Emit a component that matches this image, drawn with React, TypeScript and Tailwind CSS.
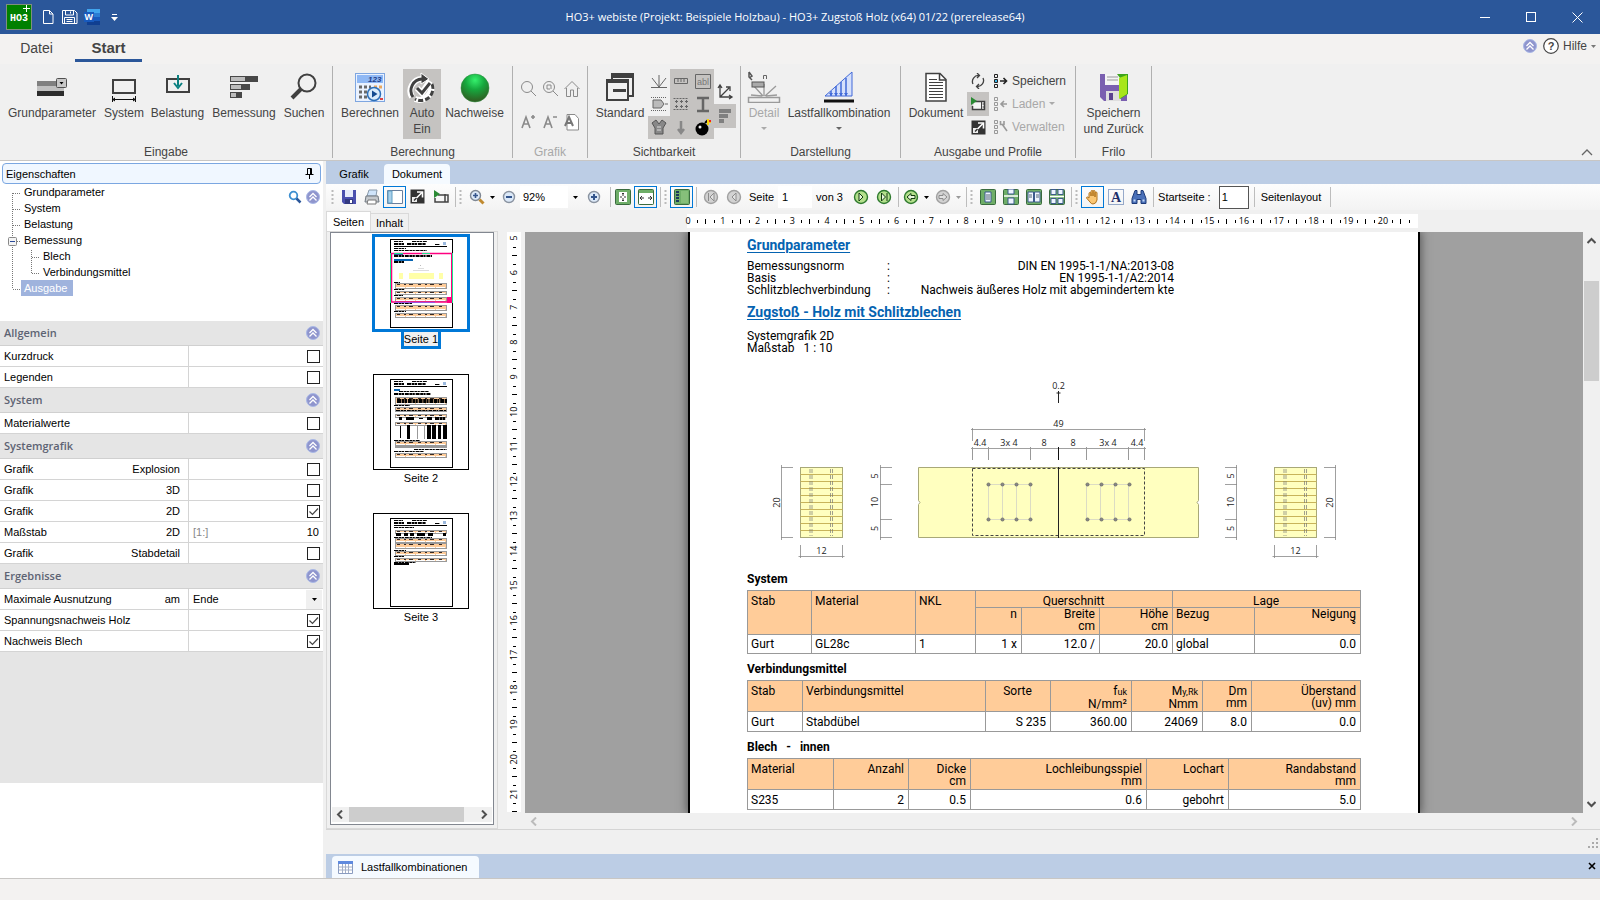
import { useState } from "react";
import type { ReactNode } from "react";

/* ---------- small shared glyphs ---------- */

function CollapseIcon() {
  return (
    <svg width="14" height="14" viewBox="0 0 14 14" aria-hidden="true">
      <circle cx="7" cy="7" r="6.5" fill="#8f95cd" stroke="#a9b8e6" />
      <path d="M3.5 7 7 3.5 10.5 7M3.5 10.5 7 7l3.5 3.5" fill="none" stroke="#fff" strokeWidth="1.3" />
    </svg>
  );
}

function Caret({ className = "text-black" }: { className?: string }) {
  return (
    <svg width="7" height="4" viewBox="0 0 7 4" className={className} aria-hidden="true">
      <path d="M0 0h7L3.5 4z" fill="currentColor" />
    </svg>
  );
}

function ScrollArrow({ d, color = "#505050" }: { d: string; color?: string }) {
  return (
    <svg width="9" height="9" viewBox="0 0 9 9" aria-hidden="true">
      <path d={d} fill="none" stroke={color} strokeWidth="2" />
    </svg>
  );
}

/* ---------- title bar ---------- */

function TitleBar() {
  return (
    <header className="flex h-[34px] shrink-0 items-center bg-[#2b579a] text-white">
      <div className="flex flex-1 items-center pl-1.5">
        <svg width="26" height="26" viewBox="0 0 26 26" aria-label="HO3+">
          <rect x=".5" y=".5" width="25" height="25" fill="#008000" stroke="#7f8f7f" />
          <text x="4" y="17" fontSize="10" fontWeight="bold" fill="#fff" fontFamily="Liberation Mono">HO3</text>
          <path d="M17 4.5h7M20.500 1v7" stroke="#fff" strokeWidth="1" />
        </svg>
        <button aria-label="Neu" className="ml-2.5">
          <svg width="12" height="16" viewBox="0 0 12 16"><path d="M1.500 1.500h6l3.500 3.500v9.500H1.500zM7.500 1.500v3.500H11" fill="none" stroke="#fff" /></svg>
        </button>
        <button aria-label="Speichern" className="ml-2">
          <svg width="16" height="16" viewBox="0 0 16 16">
            <path d="M.5 1.500h12l2.500 2.500v10.500H.5zM3.500 1.500v4.500h8V1.500M8.500 2.500v2M2.500 14.500v-6h10v6M4.500 10.500h6M4.500 12.500h6" fill="none" stroke="#fff" />
          </svg>
        </button>
        <button aria-label="Word" className="ml-1.5">
          <svg width="17" height="16" viewBox="0 0 17 16">
            <rect x="3" width="13" height="4" fill="#41a5ee" /><rect x="3" y="4" width="13" height="4" fill="#2b7cd3" />
            <rect x="3" y="8" width="13" height="4" fill="#185abd" /><rect x="3" y="12" width="13" height="4" fill="#103f91" />
            <rect y="3" width="10" height="10" fill="#185abd" />
            <text x="0.500" y="11" fontSize="9" fontWeight="bold" fill="#fff" fontFamily="Liberation Sans">W</text>
          </svg>
        </button>
        <button aria-label="Anpassen" className="ml-2.5 flex flex-col items-center gap-0.5">
          <span className="h-px w-[5px] bg-white" />
          <Caret className="text-white" />
        </button>
      </div>
      <h1 className="pr-4 font-['Open_Sans'] text-[11px]">HO3+ webiste (Projekt: Beispiele Holzbau) - HO3+ Zugstoß Holz (x64) 01/22 (prerelease64)</h1>
      <div className="flex flex-1 justify-end">
        <button aria-label="Minimieren" className="grid h-8 w-[46px] place-items-center"><span className="h-px w-2.5 bg-white" /></button>
        <button aria-label="Maximieren" className="grid h-8 w-[46px] place-items-center"><span className="size-2.5 border border-white" /></button>
        <button aria-label="Schließen" className="grid h-8 w-[46px] place-items-center">
          <svg width="11" height="11" viewBox="0 0 11 11"><path d="m.5.5 10 10m0-10-10 10" stroke="#fff" /></svg>
        </button>
      </div>
    </header>
  );
}

function MenuTabs() {
  return (
    <nav className="flex h-[30px] shrink-0 items-start bg-[#f3f2f1] text-[#444]">
      <button className="h-7 w-[73px] text-[14px]">Datei</button>
      <button className="ml-0.5 h-7 w-[67px] border-b-[3px] border-[#2b579a] pt-0.5 text-[15px] font-bold">Start</button>
      <div className="ml-auto flex h-6 items-center text-[12px]">
        <button aria-label="Einklappen" className="mr-1.5"><CollapseIcon /></button>
        <button className="flex items-center gap-1 pr-1">
          <svg width="16" height="16" viewBox="0 0 16 16">
            <circle cx="8" cy="8" r="7.300" fill="#fff" stroke="#444" strokeWidth="1.200" />
            <text x="8" y="12" fontSize="11" fontWeight="bold" textAnchor="middle" fill="#444" fontFamily="Liberation Sans">?</text>
          </svg>
          Hilfe
          <svg width="5" height="3" viewBox="0 0 7 4"><path d="M0 0h7L3.500 4z" fill="#777" /></svg>
        </button>
      </div>
    </nav>
  );
}

/* ---------- ribbon ---------- */

const ico = {
  params: (
    <svg width="32" height="32" viewBox="0 0 32 32">
      <path d="M1 10h27v5H1z" fill="#808080" /><path d="M1 15h27v5H1z" fill="#c0c0c0" /><path d="M1 20h27v5H1z" fill="#2d2d2d" />
      <rect x="20.500" y="7.500" width="10" height="9" rx="1" fill="#c8c8c8" stroke="#505050" /><path d="M23.500 11h4l-2 2.500z" />
    </svg>
  ),
  system: (
    <svg width="32" height="32" viewBox="0 0 32 32" fill="none">
      <path d="M5 9h22v13H5z" stroke="#404040" strokeWidth="2" /><path d="M4 28.500h24M4.500 25v6M27.500 25v6" stroke="#111" />
      <path d="m4 28.500 3-2v4zM28 28.500l-3-2v4z" fill="#111" />
    </svg>
  ),
  load: (
    <svg width="32" height="32" viewBox="0 0 32 32" fill="none">
      <path d="M5 8h22v13H5z" stroke="#404040" strokeWidth="2" /><path d="M16 4v11" stroke="#0a8080" strokeWidth="2" />
      <path d="m12 12 4 5 4-5" stroke="#0a8080" strokeWidth="2" />
    </svg>
  ),
  bars: (
    <svg width="32" height="32" viewBox="0 0 32 32">
      <path d="M2 5h28v6H2zM2 13h20v6H2zM2 21h12v6H2z" fill="#484848" /><path d="M3 6h14v4H3zM3 14h10v4H3zM3 22h5v4H3z" fill="#bdbdbd" />
    </svg>
  ),
  search: (
    <svg width="32" height="32" viewBox="0 0 32 32" fill="none" stroke="#404040">
      <circle cx="19" cy="12" r="8.500" strokeWidth="2" /><path d="m13 18-9 9" strokeWidth="4" />
    </svg>
  ),
  calc: (
    <svg width="32" height="32" viewBox="0 0 32 32">
      <rect x="1.500" y="2.500" width="29" height="28" fill="#eaf2ff" stroke="#7ea6e0" /><path d="M3 4h26v8H3z" fill="#8fb8f4" />
      <text x="14" y="11" fontSize="8" fontStyle="italic" fontWeight="bold" fill="#1f3f8a" fontFamily="Liberation Sans">123</text>
      <path d="M5 16h12M5 21h10M5 26h10" stroke="#6a6a6a" strokeWidth="3" strokeDasharray="3 2" /><path d="M20 16h8" stroke="#e8a860" strokeWidth="3" strokeDasharray="3 2" />
      <circle cx="20" cy="23" r="6.500" fill="#d8ebfb" stroke="#2d6fb8" strokeWidth="1.500" /><path d="m18 19.500 5.500 3.500-5.500 3.500z" fill="#124a90" />
      <path d="M26 28h3" stroke="#d44" strokeWidth="2" />
    </svg>
  ),
  auto: (
    <svg width="32" height="32" viewBox="0 0 32 32" fill="none" stroke="#404040" strokeWidth="3">
      <path d="M6 26A12 12 0 0 1 16 8" stroke="#fff" strokeWidth="6" /><path d="M25 14a12 12 0 0 1-16 14" stroke="#fff" strokeWidth="6" /><path d="M15 2v11l8-5z" fill="#404040" stroke="#fff" strokeWidth="1" />
      <path d="M7 26A11.500 11.500 0 0 1 16 8" /><path d="M26 13a12 12 0 0 1-17 15" strokeDasharray="5 2" /><path d="m11 17 5 5 8-12" stroke="#fff" strokeWidth="6" /><path d="m11 17 5 5 8-10" />
    </svg>
  ),
  ball: (
    <svg width="32" height="32" viewBox="0 0 32 32">
      <defs><radialGradient id="ball" cx="50%" cy="22%" r="75%"><stop offset="0" stopColor="#35f06c" /><stop offset=".45" stopColor="#16a83e" /><stop offset="1" stopColor="#2f5f22" /></radialGradient></defs>
      <circle cx="16" cy="17" r="14" fill="url(#ball)" stroke="#2a8a3c" strokeWidth=".5" />
    </svg>
  ),
  standard: (
    <svg width="32" height="32" viewBox="0 0 32 32">
      <rect x="8" y="3" width="21" height="22" fill="none" stroke="#404040" strokeWidth="2" /><path d="M7 2h23v5H7z" fill="#404040" />
      <rect x="3" y="9" width="21" height="20" fill="#f1f1f1" stroke="#404040" strokeWidth="2" /><path d="M2 8h23v4H2zM9 18h13v3H9z" fill="#404040" />
    </svg>
  ),
  detail: (
    <svg width="34" height="32" viewBox="0 0 34 32" fill="none" stroke="#9a9a9a">
      <path d="M1.500 26.500h31v5h-31z" strokeWidth="1.500" /><path d="M17 25V13M16 25 6 14M18 25l11-10M4 24l11 1M30 24l-11 1" strokeWidth="1.300" />
      <rect x="5" y="11" width="12" height="5" fill="#aaa" stroke="#555" /><path d="M2 1v5l3 3M2 1l3 4-3 2" stroke="#555" strokeWidth="1.500" /><path d="M16.500 8V4.500h3V8" stroke="#666" />
    </svg>
  ),
  combo: (
    <svg width="32" height="32" viewBox="0 0 32 32">
      <path d="M2 25 29 1v24z" fill="#d5e0fb" stroke="#4169d8" /><path d="M8 20v5M13 15v10M18 11v14M23 7v18" stroke="#4169d8" strokeWidth="1.500" />
      <path d="m6 22 2 3 2-3zM11 22l2 3 2-3zM16 22l2 3 2-3zM21 22l2 3 2-3z" fill="#4169d8" /><path d="M1 30h30" stroke="#111" strokeWidth="3" />
    </svg>
  ),
  doc: (
    <svg width="32" height="32" viewBox="0 0 32 32" fill="none" stroke="#404040">
      <path d="M6 2.500h14l6 6V30H6z" fill="#fff" strokeWidth="1.500" /><path d="M19.500 3v6H26" strokeWidth="1.500" />
      <path d="M9 8.500h8M9 11.500h14M9 14.500h14M9 17.500h14M9 20.500h14M9 23.500h14M9 26.500h14" />
    </svg>
  ),
  exit: (
    <svg width="32" height="32" viewBox="0 0 32 32">
      <path d="M2 3h27v27H6l-4-4z" fill="#7a5fb0" /><path d="M7 3h15v11H7z" fill="#f4f4f4" /><path d="M9 6h11M9 9h11" stroke="#999" />
      <path d="M8 20h15v10H8z" fill="#dedede" /><path d="M11 22h4v7h-4z" fill="#5a4290" /><path d="M19 3h11v20l-8 5V7z" fill="#3da51c" /><path d="M21 7l8-3v19l-8 5z" fill="#a8e61c" />
    </svg>
  ),
};

function RibbonButton({ icon, label, sub, width, pressed, disabled, arrow }: {
  icon: ReactNode; label: string; sub?: string; width: string; pressed?: boolean; disabled?: boolean; arrow?: boolean;
}) {
  return (
    <button
      aria-pressed={pressed}
      className={`flex h-[70px] flex-col items-center whitespace-nowrap pt-0.5 leading-4 ${width} ${pressed ? "bg-[#c5c3c1]" : ""} ${disabled ? "text-[#a8a8a8]" : ""}`}
    >
      <span className="mb-0.5">{icon}</span>
      <span>{label}</span>
      {sub && <span>{sub}</span>}
      {arrow && <svg className="mt-1.5" width="6" height="3" viewBox="0 0 6 3"><path d="M0 0h6L3 3z" fill={disabled ? "#aaa" : "#666"} /></svg>}
    </button>
  );
}

function Group({ title, width, muted, children }: { title: string; width: string; muted?: boolean; children: ReactNode }) {
  return (
    <section className={`my-0.5 flex flex-col border-r border-[#b0b0b0] ${width}`}>
      <div className="flex flex-1 px-1 pt-[3px]">{children}</div>
      <h2 className={`text-center leading-3 ${muted ? "text-[#a8a8a8]" : ""}`}>{title}</h2>
    </section>
  );
}

const grafikTools: [string, ReactNode][] = [
  ["Lupe", <g><circle cx="8" cy="7" r="5.500" /><path d="m12 11 5 5" /></g>],
  ["Einpassen", <g><circle cx="8" cy="7" r="5.500" /><path d="m12 11 5 5M6 5h4v4H6z" strokeDasharray="8 1" /></g>],
  ["Start", <path d="M1.500 9 9 1.500 16.500 9M3.500 8v8.500h4V10h3v6.500h4V8" />],
  ["Schrift größer", <g><path d="m3 15 4-11 4 11M4.500 11h5M14 2v4M12 4h4" strokeWidth="1.600" /></g>],
  ["Schrift kleiner", <g><path d="m3 15 4-11 4 11M4.500 11h5M12 4h4" strokeWidth="1.600" /></g>],
  ["Schrift", <g><path d="M4 1.500h8l3.500 4V17H4z" fill="#fff" /><path d="m2 13 4-9 4 9M3.500 10h5" strokeWidth="2" stroke="#777" /></g>],
];

const visTools: [string, boolean, ReactNode][] = [
  ["Lager", false, <g><path d="M1 15.500h16M9 15V3M9 15 2 6M9 15l7-9" /></g>],
  ["Maßlinien", true, <path d="M2.500 6.500h13v5h-13zM6 7v3M9 7v3M12 7v3" />],
  ["Text", true, <g><path d="M1.500 2.500h15v14h-15z" /><text x="3" y="13" fontSize="9" fill="#777" stroke="none" fontFamily="Liberation Sans">abl</text></g>],
  ["Profil", false, <g><path d="M3 5h8l3 4-3 4H3z" fill="#bbb" /><path d="M1 2.500h15M1 15.500h15" strokeDasharray="1 1" /><path d="M15 9h3" /></g>],
  ["Raster", true, <g><path d="M1.500 3.500h15M1.500 14.500h15" strokeDasharray="2 1" /><path d="M3 6.500h3M4.500 5v3M8 6.500h3M9.500 5v3M13 6.500h3M14.500 5v3M3 11.500h3M4.500 10v3M8 11.500h3M9.500 10v3M13 11.500h3M14.500 10v3" /></g>],
  ["Träger", true, <path d="M3 3h12M3 16h12M9 3v13" strokeWidth="2.500" />],
  ["Verbindung", true, <g fill="#888" stroke="#555"><path d="m2 5 4-3 3 4 3-4 4 3-3 5v6H5v-6z" /><path d="M7 9h4M7 12h4" stroke="#ddd" /></g>],
  ["Kraft", true, <path d="M9 3v12M6 11l3 4 3-4" strokeWidth="2.500" stroke="#888" />],
  ["Bombe", true, <g stroke="none"><circle cx="8" cy="11" r="6.500" fill="#000" /><circle cx="6" cy="9" r="1.500" fill="#eee" /><path d="m11 5 3-3" stroke="#000" strokeWidth="2" /><path d="M13 1h2v2h2v2h-2v2h-2V5z" fill="#f6d30a" /><path d="M15 2h2v2h-2z" fill="#e22" /></g>],
];

function Ribbon() {
  return (
    <div className="flex h-[97px] shrink-0 border-b border-[#c8c6c4] bg-[#f0f0f0] text-[12px] text-[#444]">
      <Group title="Eingabe" width="w-[333px]">
        <RibbonButton icon={ico.params} label="Grundparameter" width="w-24" />
        <RibbonButton icon={ico.system} label="System" width="w-12" />
        <RibbonButton icon={ico.load} label="Belastung" width="w-[59px]" />
        <RibbonButton icon={ico.bars} label="Bemessung" width="w-[74px]" />
        <RibbonButton icon={ico.search} label="Suchen" width="w-[46px]" />
      </Group>
      <Group title="Berechnung" width="w-[180px]">
        <RibbonButton icon={ico.calc} label="Berechnen" width="w-[66px]" />
        <RibbonButton icon={ico.auto} label="Auto" sub="Ein" width="w-[38px]" pressed />
        <RibbonButton icon={ico.ball} label="Nachweise" width="w-[67px]" />
      </Group>
      <Group title="Grafik" width="w-[75px]" muted>
        <div className="mt-[3px] grid h-[66px] grid-cols-3">
          {grafikTools.map(([name, shape]) => (
            <button key={name} aria-label={name} className="grid w-[22px] place-items-center">
              <svg width="18" height="18" viewBox="0 0 18 18" fill="none" stroke="#8a8a8a">{shape}</svg>
            </button>
          ))}
        </div>
      </Group>
      <Group title="Sichtbarkeit" width="w-[153px]">
        <RibbonButton icon={ico.standard} label="Standard" width="w-14" />
        <div className="grid h-[70px] grid-cols-3">
          {visTools.map(([name, on, shape]) => (
            <button key={name} aria-label={name} aria-pressed={on} className={`grid w-[22px] place-items-center ${on ? "bg-[#c5c3c1]" : ""}`}>
              <svg width="18" height="18" viewBox="0 0 18 18" fill="none" stroke="#666">{shape}</svg>
            </button>
          ))}
        </div>
        <div className="flex h-[70px] flex-col justify-center">
          <button aria-label="Achsen" className="grid h-6 w-[22px] place-items-center">
            <svg width="18" height="18" viewBox="0 0 18 18" fill="none" stroke="#404040" strokeWidth="1.300"><path d="M4 3v11h11M4 14 13 5M2 5l2-3 2 3M13 12l3 2-3 2M10 4h4v4" /></svg>
          </button>
          <button aria-label="Balken" aria-pressed="true" className="grid h-6 w-[22px] place-items-center bg-[#c5c3c1]">
            <svg width="18" height="18" viewBox="0 0 18 18" fill="#808080"><path d="M3 2h12v4H3zM3 7h9v4H3zM3 12h5v4H3z" /></svg>
          </button>
        </div>
      </Group>
      <Group title="Darstellung" width="w-40">
        <RibbonButton icon={ico.detail} label="Detail" width="w-[38px]" disabled arrow />
        <RibbonButton icon={ico.combo} label="Lastfallkombination" width="w-[112px]" arrow />
      </Group>
      <Group title="Ausgabe und Profile" width="w-[175px]">
        <RibbonButton icon={ico.doc} label="Dokument" width="w-[62px]" />
        <div className="grid h-[70px] grid-cols-[22px_auto] whitespace-nowrap">
          <button aria-label="Aktualisieren" className="grid place-items-center">
            <svg width="16" height="16" viewBox="0 0 16 16" fill="none" stroke="#404040" strokeWidth="1.300"><path d="M3 11A6 6 0 0 1 9 2.500M13 5a6 6 0 0 1-6 8.500M7 0l2.500 2.500L7 5M9 11l-2.500 2.500L9 16" /></svg>
          </button>
          <button className="flex items-center gap-1 pl-1"><ListIcon d="M7 8h6M10.500 5l3 3-3 3" color="#222" />Speichern</button>
          <button aria-label="Film" aria-pressed="true" className="grid place-items-center bg-[#c5c3c1]"><FilmIcon /></button>
          <button className="flex items-center gap-1 pl-1 text-[#a8a8a8]"><ListIcon d="M8 8h6M11 5 8 8l3 3" color="#999" />Laden<svg width="6" height="3" viewBox="0 0 6 3"><path d="M0 0h6L3 3z" fill="#aaa" /></svg></button>
          <button aria-label="Erweitern" className="grid place-items-center">
            <svg width="15" height="15" viewBox="0 0 15 15"><ExpandShape /></svg>
          </button>
          <button className="flex items-center gap-1 pl-1 text-[#a8a8a8]"><ListIcon d="m9 5 5 7M7.500 2v3.500H11V2" color="#999" />Verwalten</button>
        </div>
      </Group>
      <Group title="Frilo" width="w-[76px]">
        <RibbonButton icon={ico.exit} label="Speichern" sub="und Zurück" width="w-[67px]" />
      </Group>
      <button aria-label="Menüband ausblenden" className="mb-1 ml-auto mr-[7px] self-end">
        <svg width="12" height="7" viewBox="0 0 12 7"><path d="m1 6 5-5 5 5" fill="none" stroke="#666" strokeWidth="1.300" /></svg>
      </button>
    </div>
  );
}

function ListIcon({ d, color }: { d: string; color: string }) {
  return (
    <svg width="15" height="16" viewBox="0 0 15 16" fill="none" stroke={color}>
      <path d="M1.500 1.500h3v3h-3zM1.500 11.500h3v3h-3z" /><path d="M1.500 6.500h3v3h-3z" fill={color === "#222" ? "#3ab4e8" : "none"} />
      <path d={d} strokeWidth="1.600" />
    </svg>
  );
}

function ExpandShape() {
  return (
    <>
      <path d="M.5.500h14v14H.5z" fill="#333" />
      <path d="M2 8h5v5H2z" fill="#eee" />
      <path d="M7 3h5.500v5.500" stroke="#fff" strokeWidth="1.600" fill="none" />
      <path d="m12 3.500-6 6" stroke="#fff" strokeWidth="1.600" />
      <path d="m6.500 9-2.500 2.500" stroke="#333" strokeWidth="1.500" />
    </>
  );
}

function FilmIcon() {
  return (
    <svg width="16" height="14" viewBox="0 0 16 14">
      <path d="M5 4.500h9.500v8H2.500V9" fill="#f4f4f4" stroke="#404040" strokeWidth="1.500" /><path d="M11.500 4v9" stroke="#404040" /><path d="M12.500 7h2M12.500 10h2" stroke="#404040" />
      <path d="M1 0v8l6-4z" fill="#2a8a34" />
    </svg>
  );
}

/* ---------- property panel ---------- */

const tree: [string, boolean][] = [
  ["Grundparameter", false], ["System", false], ["Belastung", false], ["Bemessung", false], ["Blech", true], ["Verbindungsmittel", true], ["Ausgabe", false],
];

type Prop = { label: string; mid?: string; value: boolean | "scale" | "select" };

const sections: { title: string; rows: Prop[] }[] = [
  { title: "Allgemein", rows: [{ label: "Kurzdruck", value: false }, { label: "Legenden", value: false }] },
  { title: "System", rows: [{ label: "Materialwerte", value: false }] },
  {
    title: "Systemgrafik",
    rows: [
      { label: "Grafik", mid: "Explosion", value: false },
      { label: "Grafik", mid: "3D", value: false },
      { label: "Grafik", mid: "2D", value: true },
      { label: "Maßstab", mid: "2D", value: "scale" },
      { label: "Grafik", mid: "Stabdetail", value: false },
    ],
  },
  {
    title: "Ergebnisse",
    rows: [
      { label: "Maximale Ausnutzung", mid: "am", value: "select" },
      { label: "Spannungsnachweis Holz", value: true },
      { label: "Nachweis Blech", value: true },
    ],
  },
];

function PropRow({ id, row }: { id: string; row: Prop }) {
  const [on, setOn] = useState(row.value === true);
  return (
    <div className="flex h-[21px] items-center border-b border-[#d4d4d4] bg-white">
      <label htmlFor={id} className="flex h-full w-[189px] shrink-0 items-center justify-between border-r border-[#d4d4d4] pl-1 pr-2">
        <span>{row.label}</span>
        <span>{row.mid}</span>
      </label>
      {typeof row.value === "boolean" && (
        <span className="ml-auto mr-[3px] grid">
          <input id={id} type="checkbox" checked={on} onChange={(e) => setOn(e.target.checked)} className="col-start-1 row-start-1 size-[13px] appearance-none border border-[#222] bg-white" />
          {on && <svg className="pointer-events-none col-start-1 row-start-1" width="13" height="13" viewBox="0 0 13 13"><path d="m2.500 6.500 3 3 5.500-6" fill="none" stroke="#444" strokeWidth="1.200" /></svg>}
        </span>
      )}
      {row.value === "scale" && (
        <div className="flex min-w-0 flex-1 items-center pl-1 pr-1">
          <span className="text-[#888]">[1:]</span>
          <input id={id} defaultValue="10" className="min-w-0 flex-1 bg-transparent text-right outline-none" />
        </div>
      )}
      {row.value === "select" && (
        <div className="relative flex flex-1 items-center">
          <select id={id} className="w-full appearance-none bg-transparent pl-1 outline-none"><option>Ende</option></select>
          <span className="pointer-events-none absolute right-px grid h-[19px] w-4 place-items-center bg-[#f0f0f0]"><svg width="5" height="3" viewBox="0 0 5 3"><path d="M0 0h5L2.500 3z" /></svg></span>
        </div>
      )}
    </div>
  );
}

function PropertyPanel() {
  return (
    <aside className="flex w-[323px] shrink-0 flex-col bg-white">
      <div className="mx-0.5 mt-0.5 flex h-[21px] items-center justify-between rounded-sm border border-[#7ba7e1] bg-[#f0f7ff] pl-[3px] pr-1.5">
        <h2>Eigenschaften</h2>
        <button aria-label="Anheften"><svg width="9" height="11" viewBox="0 0 9 11"><path d="M2.500 6V.500h4V6M5.500.500V6M.5 6.500h8M4.500 7v4" fill="none" stroke="#000" /></svg></button>
      </div>
      <div className="relative flex h-[137px] items-start justify-between">
        <svg className="absolute left-0 top-0" width="44" height="112" viewBox="0 0 44 112" fill="none">
          <path d="M12.500 9v96M13 9.500h8M13 25.500h8M13 41.500h8M13 57.500h8M13 105.500h8M31.500 66v24M32 73.500h8M32 89.500h8" stroke="#777" strokeDasharray="1 1" />
          <rect x="8.500" y="53.500" width="8" height="8" rx="1" fill="#f4f4f4" stroke="#888" /><path d="M10 57.500h5" stroke="#2a4a9a" />
        </svg>
        <ul>
          {tree.map(([name, nested]) => (
            <li key={name} className={`flex h-4 ${nested ? "pl-10" : "pl-[21px]"}`}>
              <button className={`pl-[3px] pr-1.5 leading-4 ${name === "Ausgabe" ? "bg-[#9fb3dd] text-white" : ""}`}>{name}</button>
            </li>
          ))}
        </ul>
        <div className="flex items-center gap-1 pr-[3px] pt-1.5">
          <button aria-label="Suchen"><svg width="14" height="14" viewBox="0 0 14 14" fill="none"><circle cx="5.500" cy="5.500" r="3.800" stroke="#3d8fd0" strokeWidth="1.800" /><path d="m8.500 8.500 4 4" stroke="#2b579a" strokeWidth="2.500" /></svg></button>
          <button aria-label="Alle zuklappen"><CollapseIcon /></button>
        </div>
      </div>
      <div className="h-[462px] shrink-0 bg-[#e5e5e5]">
        {sections.map((s) => (
          <section key={s.title}>
            <div className="flex h-[25px] items-center justify-between border-b border-[#d0d0d0] pl-1 pr-[3px]">
              <h3 className="font-['Open_Sans'] text-[11px] font-semibold text-[#5d6373]">{s.title}</h3>
              <button aria-label="Zuklappen"><CollapseIcon /></button>
            </div>
            {s.rows.map((row, i) => <PropRow key={i} id={`${s.title}-${i}`} row={row} />)}
          </section>
        ))}
      </div>
    </aside>
  );
}

/* ---------- document toolbar ---------- */

function Tool({ name, framed, children }: { name: string; framed?: boolean; children: ReactNode }) {
  return (
    <button aria-label={name} className={`grid h-[22px] w-[23px] shrink-0 place-items-center ${framed ? "border border-[#0078d7]" : ""}`}>
      <svg width="16" height="16" viewBox="0 0 16 16" fill="none">{children}</svg>
    </button>
  );
}

const Divider = () => <span className="h-5 w-1 shrink-0 border-r border-[#bdbdbd]" />;
const Grip = () => (
  <span className="grid w-[9px] shrink-0 place-items-center">
    <svg width="3" height="15" viewBox="0 0 3 15"><path d="M1.500 0v15" stroke="#bbb" strokeWidth="2" strokeDasharray="2 2" /></svg>
  </span>
);
const Drop = ({ muted }: { muted?: boolean }) => (
  <button aria-label="Auswahl" className="grid w-[9px] shrink-0 place-items-center">
    <svg width="5" height="3" viewBox="0 0 5 3"><path d="M0 0h5L2.500 3z" fill={muted ? "#999" : "#000"} /></svg>
  </button>
);

function Round({ d, on }: { d: string; on?: boolean }) {
  return (
    <>
      <circle cx="8" cy="8" r="6.500" fill={on ? "#b4e08c" : "#d2d2d2"} stroke={on ? "#2f7a2f" : "#a0a0a0"} strokeWidth="1.400" />
      <path d={d} stroke={on ? "#123c12" : "#8c8c8c"} fill={on ? "#e9f8dc" : "#e2e2e2"} />
    </>
  );
}

function Lens({ plus }: { plus?: boolean }) {
  return (
    <>
      <circle cx="8" cy="8" r="5.500" fill="#dce9f8" stroke="#8a93a0" strokeWidth="1.400" />
      <path d={plus ? "M5 8h6M8 5v6" : "M5 8h6"} stroke="#34558c" strokeWidth="2" />
    </>
  );
}

function GreenBox({ children }: { children: ReactNode }) {
  return <><rect x=".5" y=".5" width="15" height="15" rx="1" fill="#6fae68" stroke="#3a6b3e" />{children}</>;
}

function Toolbar() {
  return (
    <div className="flex h-[26px] w-full items-center bg-linear-to-b from-[#fdfdfd] to-[#f3f3f3] pl-0.5">
      <Grip />
      <Tool name="Speichern"><path d="M1 1h14v14H3l-2-2z" fill="#4a4fae" /><path d="M4 1h8v7H4z" fill="#e6ebfa" /><path d="M4 10h8v5H4z" fill="#333a80" /><path d="M9 11h2v3H9z" fill="#fff" /></Tool>
      <Tool name="Drucken"><path d="M5 1h8l-1 6H3z" fill="#cfe4fa" stroke="#8899aa" /><path d="M2 7h12l1 6H1z" fill="#c4c8cc" stroke="#707880" /><path d="M4 11h8v4H3z" fill="#fff" stroke="#777" /></Tool>
      <Tool name="Seitenleiste" framed><path d="M.5 1.500h15v13H.5z" fill="#fff" stroke="#6a7f9c" /><path d="M1 2h4v12H1z" fill="#a8d0ea" stroke="#5f9fc4" /></Tool>
      <Tool name="Erweitern"><ExpandShape /></Tool>
      <Tool name="Film"><path d="M5 6h10v7H2V9" stroke="#444" strokeWidth="1.500" /><path d="M12 5v8" stroke="#444" strokeWidth="1.500" /><path d="M1 1v8l6-4z" fill="#2a8a34" /></Tool>
      <Divider /><Grip />
      <Tool name="Zoomwerkzeug"><circle cx="6.500" cy="6.500" r="5" fill="#dce9f8" stroke="#7f8894" strokeWidth="1.400" /><path d="M4 6.500h5M6.500 4v5" stroke="#34558c" strokeWidth="1.600" /><path d="m10.500 10.500 4 4" stroke="#c08a30" strokeWidth="3" /></Tool>
      <Drop />
      <Tool name="Verkleinern"><Lens /></Tool>
      <div className="relative flex h-[22px] w-[62px] shrink-0 items-center">
        <select aria-label="Zoom" className="h-full w-12 appearance-none bg-white pl-[3px] outline-none"><option>92%</option></select>
        <svg className="ml-[5px]" width="5" height="3" viewBox="0 0 5 3"><path d="M0 0h5L2.500 3z" /></svg>
      </div>
      <Tool name="Vergrößern"><Lens plus /></Tool>
      <span className="w-0.5" />
      <Divider />
      <Tool name="Ganze Seite"><GreenBox><path d="M4 3h8v10H4z" fill="#fff" /><path d="M8 4v3M8 9v3M5 8h2M9 8h2M7 5l1-1 1 1M7 11l1 1 1-1" stroke="#333" /></GreenBox></Tool>
      <Tool name="Seitenbreite" framed><GreenBox><path d="M1 4h14v11H1z" fill="#fff" /><path d="M2 9h4M10 9h4M4 7 2 9l2 2M12 7l2 2-2 2" stroke="#333" /></GreenBox></Tool>
      <Divider /><Grip />
      <Tool name="Miniaturen" framed><GreenBox><path d="M2 3h3M2 6h3M2 9h3M2 12h3" stroke="#1c3a5c" strokeWidth="2" /><path d="M7 2h7v12H7z" fill="#86bf7a" /></GreenBox></Tool>
      <Divider />
      <span className="w-0.5" />
      <Tool name="Erste Seite"><Round d="M5.500 4v8M11 4 7 8l4 4z" /></Tool>
      <Tool name="Vorherige Seite"><Round d="M10 4 6 8l4 4z" /></Tool>
      <label className="flex items-center gap-1 pl-1">Seite<input defaultValue="1" className="h-[22px] w-[34px] bg-white pl-1 outline-none" /></label>
      <span className="w-[37px] pl-1">von 3</span>
      <Tool name="Nächste Seite"><Round on d="M6 4v8l4-4z" /></Tool>
      <Tool name="Letzte Seite"><Round on d="M5.500 4v8l4-4zM11 4v8" /></Tool>
      <Divider />
      <Tool name="Zurück"><Round on d="M4 8l4-3.500v2h4v3H8v2z" /></Tool><Drop />
      <Tool name="Vor"><Round d="m12 8-4-3.500v2H4v3h4v2z" /></Tool><Drop muted />
      <Divider /><Grip />
      <Tool name="Einzelseite"><GreenBox><path d="M5 3h6v10H5z" fill="#eef4ff" stroke="#3c5a8c" /><path d="M6 6h4M6 8h4M6 10h4" stroke="#567" /></GreenBox></Tool>
      <Tool name="Fortlaufend"><GreenBox><path d="M5 0h6v5H5zM5 9h6v6H5z" fill="#eef4ff" stroke="#3c5a8c" /><path d="M1 7h14" stroke="#fff" strokeWidth="1.500" /></GreenBox></Tool>
      <Tool name="Doppelseite"><GreenBox><path d="M2 3h5.500v10H2zM8.500 3H14v10H8.500z" fill="#eef4ff" stroke="#3c5a8c" /><path d="M3 6h3M3 8h3M10 6h3M10 8h3" stroke="#567" /></GreenBox></Tool>
      <Tool name="Doppelseite fortlaufend"><GreenBox><path d="M2 .5h5v5H2zM9 .5h5v5H9zM2 9.500h5v5H2zM9 9.500h5v5H9z" fill="#eef4ff" stroke="#3c5a8c" /><path d="M1 7.500h14" stroke="#fff" strokeWidth="1.500" /></GreenBox></Tool>
      <Divider /><Grip />
      <Tool name="Hand" framed><path d="M4 9V4.500q0-1 1-1t1 1V7V2.500q0-1 1-1t1 1V7V2.500q0-1 1-1t1 1V8V4q0-1 1-1t1 1v7q-1 4-4 4H8q-2 0-3-2L1.500 9q0-1 1-1z" fill="#fbc774" stroke="#b0721c" /></Tool>
      <Tool name="Textauswahl"><path d="M.5.500h15v15H.5z" stroke="#345a9a" strokeDasharray="1 1" /><text x="3" y="13" fontSize="14" fontWeight="bold" fill="#1d2f6a" fontFamily="Liberation Serif">A</text></Tool>
      <Tool name="Suchen"><path d="M4 1.500h2v4h4v-4h2l3 8v5h-5v-4H6v4H1v-5z" fill="#4a70b8" stroke="#1d3a78" /><path d="M2.500 11.500h2M11.500 11.500h2" stroke="#c4d8f6" strokeWidth="2" /></Tool>
      <Divider />
      <label className="flex items-center gap-2 whitespace-nowrap pl-1">Startseite :<input defaultValue="1" className="h-[23px] w-[30px] border border-[#555] bg-white pl-0.5 outline-none" /></label>
      <span className="w-0.5" />
      <Divider />
      <button className="px-1.5">Seitenlayout</button>
      <Divider />
    </div>
  );
}

/* ---------- page thumbnails ---------- */

// one rectangle per entry: x, y, width, height, colour key
type Bit = [number, number, number, number, string];
const TABLE = "#ffcc99";
const head: Bit[] = [[4, 2, 9, 1, "t"], [22, 2, 15, 1, "t"], [4, 4, 10, 2, "t"], [17, 4, 19, 2, "t"], [45, 5, 5, 1, "t"], [53, 3, 3, 3, "#9ab8dd"], [4, 7, 53, 1, "#000"]];

const thumbs: Bit[][] = [
  [
    ...head, [4, 9, 12, 1, "t"], [4, 11, 33, 1, "t"], [4, 15, 9, 1, "#0563b1"], [4, 16, 38, 2, "t"], [4, 20, 19, 2, "#0563b1"], [4, 22, 10, 2, "t"],
    [19, 34, 25, 6, "#ffffa8"], [9, 34, 4, 6, "#ffffa8"], [49, 34, 4, 6, "#ffffa8"], [23, 31, 16, 1, "#ddd"], [28, 29, 6, 1, "#ddd"], [30, 26, 1, 1, "#bbb"],
    [4, 43, 6, 1, "t"], [5, 44, 52, 5, TABLE], [4, 50, 11, 1, "t"], [5, 52, 52, 3, TABLE], [4, 56, 9, 1, "t"], [5, 58, 52, 4, TABLE],
    [4, 64, 18, 1, "t"], [5, 66, 52, 5, TABLE], [4, 72, 12, 1, "t"], [5, 74, 52, 4, TABLE],
  ],
  [
    ...head, [4, 10, 6, 2, "#0563b1"], [9, 12, 30, 1, "t"], [4, 14, 37, 2, "t"], [5, 18, 52, 7, TABLE], [7, 20, 50, 4, "t"], [4, 26, 16, 1, "t"],
    [5, 28, 52, 4, TABLE], [6, 31, 50, 1, "t"], [5, 35, 52, 3, TABLE], [9, 38, 3, 3, "#000"], [16, 38, 8, 3, "#000"], [29, 39, 4, 1, "#000"], [37, 38, 5, 3, "#000"], [45, 38, 11, 3, "t"],
    [5, 43, 52, 3, TABLE], [10, 47, 1, 12, "t"], [17, 46, 3, 14, "#000"], [27, 46, 1, 14, "#999"], [34, 46, 1, 14, "#999"], [37, 46, 4, 14, "#000"], [42, 46, 4, 14, "#000"], [48, 46, 3, 14, "#000"], [53, 46, 4, 14, "#000"],
    [4, 61, 26, 1, "t"], [5, 62, 52, 4, TABLE], [5, 67, 52, 2, "#999"], [24, 70, 33, 1, "t"], [4, 72, 30, 1, "t"], [5, 74, 52, 4, TABLE],
  ],
  [
    ...head, [4, 9, 20, 1, "t"], [5, 12, 52, 3, TABLE], [6, 15, 5, 3, "#000"], [14, 15, 4, 3, "#000"], [20, 15, 4, 3, "#000"], [27, 15, 8, 3, "#000"], [38, 15, 5, 3, "#000"], [53, 15, 3, 3, "#000"],
    [4, 19, 38, 1, "t"], [5, 20, 52, 4, TABLE], [5, 25, 52, 5, TABLE], [4, 32, 12, 1, "t"], [5, 33, 52, 4, TABLE], [4, 38, 10, 1, "t"], [5, 40, 52, 3, TABLE], [4, 44, 22, 1, "t"], [4, 45, 15, 2, "#000"],
  ],
];

function PageThumb({ index }: { index: number }) {
  const selected = index === 0;
  return (
    <li className="flex h-[139px] flex-col items-center">
      <button className={`grid h-[98px] w-[98px] place-items-center ${selected ? "border-[3px] border-[#0078d7]" : "p-px"}`} aria-label={`Vorschau ${index + 1}`}>
        <span className={`flex h-full w-full justify-center ${selected ? "pt-0.5" : "border border-black pt-1"}`}>
          <svg width="63" height="90" viewBox="0 0 63 90">
            <rect x=".5" y=".5" width="62" height="88" fill="#fff" stroke="#000" />
            {thumbs[index].map(([x, y, w, h, c], i) =>
              c === "t" ? (
                <path key={i} d={`M${x} ${y + h / 2}h${w}`} stroke="#000" strokeWidth={h} strokeDasharray="4 .6 3 .4 2 .8" />
              ) : c === TABLE ? (
                <g key={i}>
                  <rect x={x + 0.5} y={y + 0.5} width={w - 1} height={h} fill={TABLE} stroke="#999" />
                  <path d={`M${x + 2} ${y + 1.5}h${w - 4}`} stroke="#3a2a22" strokeDasharray="3 4 2 3 4 5" />
                  <path d={`M${x + 1} ${y + h - 0.5}h${w - 2}`} stroke="#fff" strokeDasharray="9 1" />
                </g>
              ) : (
                <rect key={i} x={x} y={y} width={w} height={h} fill={c} />
              ),
            )}
            {selected && (
              <g fill="none">
                <path d="M1 14.500h61M1 63h61M1.500 15v48" stroke="#ff0080" strokeWidth="1.500" /><path d="M.5 14v50M62.500 14v50" stroke="#19e68c" />
                <path d="M32 14.500h8M4 14.500h9" stroke="#19e68c" /><path d="M5 63.500h40" stroke="#a050e0" /><path d="M57 58h5v6h-5zM61 15h1v45h-1z" fill="#ff0080" />
              </g>
            )}
          </svg>
        </span>
      </button>
      <span className={selected ? "-mt-[3px] border-[3px] border-[#0078d7] bg-[#f0f0f0] leading-[14px]" : "-mt-px leading-4"}>Seite {index + 1}</span>
    </li>
  );
}

function PagesPanel() {
  return (
    <div className="flex w-[172px] shrink-0 flex-col">
      <div className="flex h-5 items-end">
        <button className="h-5 w-[45px] border border-b-0 border-[#d9d9d9] bg-white">Seiten</button>
        <button className="h-[18px] w-[38px] border border-l-0 border-b-0 border-[#d9d9d9]">Inhalt</button>
      </div>
      <div className="flex flex-1 flex-col border border-[#d9d9d9] p-[3px] pt-0">
        <div className="flex flex-1 flex-col border border-[#828790] bg-white px-px pb-0.5 pt-px">
          <ul className="flex-1 pl-[18px]">
            {thumbs.map((_, i) => <PageThumb key={i} index={i} />)}
          </ul>
          <div className="flex h-[15px] items-center justify-between bg-[#f0f0f0] px-[3px]">
            <ScrollArrow d="M7 .5 3 4.500l4 4" />
            <span className="mr-3 h-full w-[115px] bg-[#cdcdcd]" />
            <ScrollArrow d="m2 .5 4 4-4 4" />
          </div>
        </div>
      </div>
    </div>
  );
}

/* ---------- rulers ---------- */

const STEP = 34.75;

function HorizontalRuler() {
  return (
    <svg width="731" height="14" viewBox="0 0 731 14" className="overflow-visible bg-white" fontFamily="Open Sans" fontSize="9" textAnchor="middle">
      {Array.from({ length: 21 }, (_, n) => {
        const x = 1 + n * STEP;
        return (
          <g key={n}>
            <text x={x} y="10">{n}</text>
            <path d={`M${Math.round(x + 9) + 0.5} 6v3M${Math.round(x + 17) + 0.5} 5v5M${Math.round(x + 26) + 0.5} 6v3`} stroke="#000" />
          </g>
        );
      })}
    </svg>
  );
}

function VerticalRuler() {
  return (
    <svg width="14" height="580" viewBox="0 0 14 580" className="shrink-0 bg-white" fontFamily="Open Sans" fontSize="9" textAnchor="middle">
      {Array.from({ length: 17 }, (_, i) => {
        const y = 6 + i * STEP;
        return (
          <g key={i}>
            <text transform={`translate(10 ${y}) rotate(-90)`}>{i + 5}</text>
            <path d={`M6 ${Math.round(y + 9) + 0.5}h3M5 ${Math.round(y + 17) + 0.5}h5M6 ${Math.round(y + 26) + 0.5}h3`} stroke="#000" />
          </g>
        );
      })}
    </svg>
  );
}

/* ---------- document page ---------- */

const bolts = [988, 1002, 1016, 1030, 1087, 1101, 1115, 1129];
const topTicks = [972.5, 988.5, 1030.5, 1058.5, 1086.5, 1128.5, 1144.5];
const topDims: [number, string][] = [[980, "4.4"], [1009, "3x 4"], [1044, "8"], [1073, "8"], [1108, "3x 4"], [1137, "4.4"]];

function Section({ x, dim, ext, label }: { x: number; dim: number; ext: number; label: number }) {
  return (
    <g>
      <rect x={x} y="467.5" width="42" height="70" fill="#ffffbf" stroke="#a8a878" />
      {Array.from({ length: 9 }, (_, i) => <path key={i} d={`M${x} ${474.5 + i * 7}h42`} stroke="#c8b45a" />)}
      <path d={`M${x + 9.5} 469v67M${x + 11.5} 469v67M${x + 30} 469v67M${x + 32} 469v67`} stroke="#777" strokeWidth=".7" strokeDasharray="4 2" />
      <path d={`M${dim} 465v75M${ext} 467.5h12M${ext} 537.5h12M${x} 545v13M${x + 42} 545v13M${x - 2} 556.5h46`} stroke="#888" strokeWidth=".8" fill="none" />
      <text x={x + 21} y="554">12</text>
      <text transform={`translate(${label} 502.5) rotate(-90)`}>20</text>
    </g>
  );
}

function SideDims({ x, ext, label }: { x: number; ext: number; label: number }) {
  return (
    <g>
      <path d={`M${x} 465v75M${ext} 467.5h12M${ext} 484.500h12M${ext} 519.500h12M${ext} 537.500h12`} stroke="#888" strokeWidth=".8" fill="none" />
      <text transform={`translate(${label} 476) rotate(-90)`}>5</text>
      <text transform={`translate(${label} 502) rotate(-90)`}>10</text>
      <text transform={`translate(${label} 528.5) rotate(-90)`}>5</text>
    </g>
  );
}

function JointDrawing() {
  return (
    <svg width="613" height="200" viewBox="747 370 613 200" className="mt-4 block" fontFamily="Open Sans" fontSize="9" textAnchor="middle" fill="#222">
      <text x="1058.5" y="389">0.2</text>
      <path d="M1058.500 391v12M1056.500 393h4" stroke="#222" />
      <text x="1058.500" y="427">49</text>
      <path d="M971 429.500h175M972.500 428v13M1144.500 428v13M971 448.500h175" stroke="#888" strokeWidth=".8" />
      {topTicks.map((x) => <path key={x} d={`M${x} 447v13`} stroke={x === 1058.5 ? "#111" : "#999"} />)}
      {topDims.map(([x, t]) => <text key={x} x={x} y="446">{t}</text>)}
      <path d="M918.500 467.500h280v33q-3 2 0 4v33h-280v-33q3-2 0-4z" fill="#ffffbf" stroke="#a8a878" />
      <path d="M972.500 468.500h172v67h-172z" fill="none" stroke="#444" strokeDasharray="3 2" />
      <path d="M1058.500 467v71" stroke="#222" />
      <path d="M988.500 484.500h42v35h-42zM1002.500 485v34M1016.500 485v34M1086.500 484.500h42v35h-42zM1100.500 485v34M1114.500 485v34" fill="none" stroke="#dcdcc4" />
      {bolts.map((x) => <g key={x} fill="#888" stroke="#555" strokeWidth=".6"><circle cx={x + 0.5} cy="484.500" r="1.600" /><circle cx={x + 0.5} cy="519.500" r="1.600" /></g>)}
      <Section x={800.5} dim={781.5} ext={781} label={780} />
      <Section x={1274.5} dim={1335.5} ext={1324} label={1333} />
      <SideDims x={880.5} ext={880} label={878} />
      <SideDims x={1236.5} ext={1225} label={1234} />
    </svg>
  );
}

const TH = "border border-[#999] bg-[#ffcc99] pl-[3px] pr-1 pt-1 align-top font-normal";
const TD = "border border-[#999] pl-[3px] pr-1";

function Cols({ widths }: { widths: number[] }) {
  return <colgroup>{widths.map((w, i) => <col key={i} style={{ width: w }} />)}</colgroup>;
}

function DocTitle({ children }: { children: ReactNode }) {
  return <h4 className="mb-[3px] mt-[7px] whitespace-pre text-[12px] font-bold leading-4">{children}</h4>;
}

function DocumentPage() {
  return (
    <article className="h-full w-[732px] shrink-0 overflow-hidden border-x-2 border-black bg-white pl-[57px] font-['Roboto'] text-[12px] leading-3 text-black shadow-[0_0_9px_1px_#555]">
      <h3 className="mb-[7px] mt-[5px] text-[14px] font-bold leading-4 text-[#0563b1] underline underline-offset-2">Grundparameter</h3>
      <dl className="grid w-[427px] grid-cols-[140px_10px_1fr]">
        <dt>Bemessungsnorm</dt><span>:</span><dd className="text-right">DIN EN 1995-1-1/NA:2013-08</dd>
        <dt>Basis</dt><span>:</span><dd className="text-right">EN 1995-1-1/A2:2014</dd>
        <dt>Schlitzblechverbindung</dt><span>:</span><dd className="text-right">Nachweis äußeres Holz mit abgemindertem kte</dd>
      </dl>
      <h3 className="mb-2.5 mt-2 text-[14px] font-bold leading-4 text-[#0563b1] underline underline-offset-2">Zugstoß - Holz mit Schlitzblechen</h3>
      <p>Systemgrafik 2D</p>
      <p className="whitespace-pre">Maßstab   1 : 10</p>
      <JointDrawing />
      <h4 className="mb-[3px] mt-px text-[12px] font-bold leading-4">System</h4>
      <table className="w-[613px] table-fixed border-collapse text-right">
        <Cols widths={[64, 104, 60, 46, 78, 73, 82, 106]} />
        <thead>
          <tr className="h-[17px]">
            <th rowSpan={2} className={`${TH} text-left`}>Stab</th>
            <th rowSpan={2} className={`${TH} text-left`}>Material</th>
            <th rowSpan={2} className={`${TH} text-left`}>NKL</th>
            <th colSpan={3} className={`${TH} text-center`}>Querschnitt</th>
            <th colSpan={2} className={`${TH} text-center`}>Lage</th>
          </tr>
          <tr className="h-[27px]">
            {["n", "Breite\ncm", "Höhe\ncm", "Bezug", "Neigung\n°"].map((t) => (
              <th key={t} className={`whitespace-pre border border-[#999] bg-[#ffcc99] pl-[3px] pr-1 align-top font-normal ${t === "Bezug" ? "text-left" : ""}`}>{t}</th>
            ))}
          </tr>
        </thead>
        <tbody>
          <tr className="h-[19px]">
            {["Gurt", "GL28c", "1", "1 x", "12.0 /", "20.0", "global", "0.0"].map((t, i) => <td key={i} className={`${TD} ${i < 3 || i === 6 ? "text-left" : ""}`}>{t}</td>)}
          </tr>
        </tbody>
      </table>
      <DocTitle>Verbindungsmittel</DocTitle>
      <table className="w-[613px] table-fixed border-collapse text-right">
        <Cols widths={[55, 183, 65, 81, 71, 49, 109]} />
        <thead>
          <tr className="h-[31px]">
            <th className={`${TH} text-left`}>Stab</th>
            <th className={`${TH} text-left`}>Verbindungsmittel</th>
            <th className={`${TH} text-center`}>Sorte</th>
            <th className={TH}>f<span className="text-[9px]">uk</span><br />N/mm²</th>
            <th className={TH}>M<span className="text-[9px]">y,Rk</span><br />Nmm</th>
            <th className={TH}>Dm<br />mm</th>
            <th className={TH}>Überstand<br />(uv) mm</th>
          </tr>
        </thead>
        <tbody>
          <tr className="h-5">
            {["Gurt", "Stabdübel", "S 235", "360.00", "24069", "8.0", "0.0"].map((t, i) => <td key={i} className={`${TD} ${i < 2 ? "text-left" : ""}`}>{t}</td>)}
          </tr>
        </tbody>
      </table>
      <DocTitle>{"Blech   -   innen"}</DocTitle>
      <table className="w-[613px] table-fixed border-collapse text-right">
        <Cols widths={[86, 75, 62, 176, 82, 132]} />
        <thead>
          <tr className="h-[31px]">
            {["Material", "Anzahl", "Dicke\ncm", "Lochleibungsspiel\nmm", "Lochart", "Randabstand\nmm"].map((t, i) => <th key={t} className={`${TH} whitespace-pre ${i === 0 ? "text-left" : ""}`}>{t}</th>)}
          </tr>
        </thead>
        <tbody>
          <tr className="h-5">
            {["S235", "2", "0.5", "0.6", "gebohrt", "5.0"].map((t, i) => <td key={t} className={`${TD} ${i === 0 ? "text-left" : ""}`}>{t}</td>)}
          </tr>
        </tbody>
      </table>
    </article>
  );
}

function Viewer() {
  return (
    <div className="flex min-w-0 flex-1 flex-col pl-[9px]">
      <div className="flex h-[18px] shrink-0 pl-[180px]"><HorizontalRuler /></div>
      <div className="flex min-h-0 flex-1">
        <VerticalRuler />
        <div className="ml-1 flex min-w-0 flex-1 flex-col">
          <div className="flex min-h-0 flex-1 justify-center overflow-hidden bg-[#a0a0a0]"><DocumentPage /></div>
          <div className="flex h-4 items-center justify-between px-1">
            <ScrollArrow d="M7 .5 3 4.500l4 4" color="#bbb" />
            <ScrollArrow d="m2 .5 4 4-4 4" color="#bbb" />
          </div>
        </div>
        <div className="flex w-[17px] shrink-0 flex-col items-center pb-5 pt-1">
          <ScrollArrow d="m.5 7 4-4 4 4" />
          <span className="mt-9 h-[100px] w-[15px] bg-[#cdcdcd]" />
          <span className="mt-auto"><ScrollArrow d="m.5 2 4 4 4-4" /></span>
        </div>
      </div>
    </div>
  );
}

export default function App() {
  return (
    <div className="flex h-screen flex-col overflow-hidden bg-[#f0f0f0] font-['Liberation_Sans',sans-serif] text-[11px] leading-4 text-black">
      <TitleBar />
      <MenuTabs />
      <Ribbon />
      <main className="flex min-h-0 flex-1">
        <PropertyPanel />
        <div className="ml-[3px] flex min-w-0 flex-1 flex-col">
          <div className="flex h-[23px] shrink-0 items-end bg-[#bccde5]">
            <button className="h-5 w-14">Grafik</button>
            <button className="ml-0.5 h-5 w-[66px] rounded-t bg-[#f5faff]">Dokument</button>
          </div>
          <Toolbar />
          <div className="flex min-h-0 flex-1 border-b border-[#d4d4d4] pt-px">
            <PagesPanel />
            <div className="flex min-w-0 flex-1 pt-[3px]"><Viewer /></div>
          </div>
          <div className="flex h-6 shrink-0 items-end justify-end pb-1">
            <svg width="12" height="12" viewBox="0 0 12 12" fill="#aaa"><path d="M8 0h2v2H8zM4 4h2v2H4zM8 4h2v2H8zM0 8h2v2H0zM4 8h2v2H4zM8 8h2v2H8z" /></svg>
          </div>
          <div className="flex h-6 shrink-0 items-end bg-[#bccde5] pl-1.5">
            <button className="flex h-[22px] w-[147px] items-center gap-2 rounded-t bg-[#f5faff] pl-1.5">
              <svg width="15" height="13" viewBox="0 0 15 13"><path d="M.5.500h14v12H.5z" fill="#fff" stroke="#8a9cc0" /><path d="M0 0h15v3H0z" fill="#5f8ade" /><path d="M1 6h13M1 9h13M4.500 3v9M7.500 3v9M10.500 3v9" stroke="#a4b0c8" /></svg>
              Lastfallkombinationen
            </button>
            <button aria-label="Schließen" className="ml-auto mr-1 self-center">
              <svg width="8" height="8" viewBox="0 0 8 8"><path d="m1 1 6 6m0-6L1 7" stroke="#000" strokeWidth="1.600" /></svg>
            </button>
          </div>
        </div>
      </main>
      <footer className="h-[22px] shrink-0 border-t border-[#c8c6c4] bg-[#f3f2f1]" />
    </div>
  );
}
